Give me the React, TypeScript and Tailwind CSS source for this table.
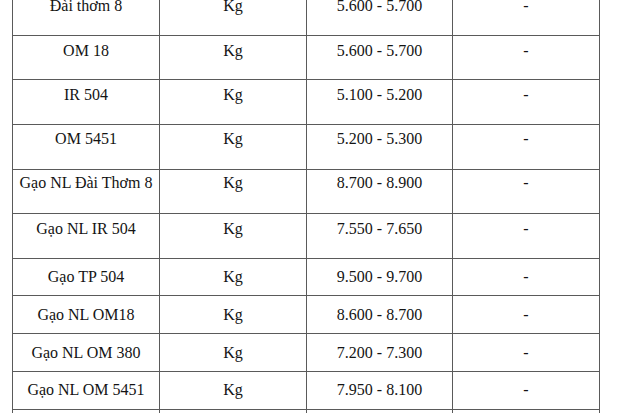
const ROWS: { name: string; price: string; row: string; cell: string }[] = [
  { name: 'Đài thơm 8', price: '5.600 - 5.700', row: 'h-[45px]', cell: 'pt-[5px]' },
  { name: 'OM 18', price: '5.600 - 5.700', row: 'h-[44px]', cell: 'pt-[5px]' },
  { name: 'IR 504', price: '5.100 - 5.200', row: 'h-[45px]', cell: 'pt-[5px]' },
  { name: 'OM 5451', price: '5.200 - 5.300', row: 'h-[45px]', cell: 'pt-[4px]' },
  { name: 'Gạo NL Đài Thơm 8', price: '8.700 - 8.900', row: 'h-[44px]', cell: 'pt-[3px]' },
  { name: 'Gạo NL IR 504', price: '7.550 - 7.650', row: 'h-[45px]', cell: 'pt-[5px]' },
  { name: 'Gạo TP 504', price: '9.500 - 9.700', row: 'h-[37px]', cell: 'pt-[8px]' },
  { name: 'Gạo NL OM18', price: '8.600 - 8.700', row: 'h-[38px]', cell: 'pt-[9px]' },
  { name: 'Gạo NL OM 380', price: '7.200 - 7.300', row: 'h-[38px]', cell: 'pt-[9px]' },
  { name: 'Gạo NL OM 5451', price: '7.950 - 8.100', row: 'h-[38px]', cell: 'pt-[8px]' },
  { name: '', price: '', row: 'h-[40px]', cell: 'pt-[8px]' },
];

export default function App() {
  return (
    <div className="h-[413px] w-[620px] overflow-hidden bg-white font-[family-name:'Liberation_Serif','Times_New_Roman',serif] text-[16px] leading-[20px] text-[#141414]">
      <div className="-mt-[9px] ml-[12px] w-[588px] border-l border-[#5a5a5a]">
        {ROWS.map((r, i) => (
          <div
            key={i}
            className={`grid grid-cols-[147px_147px_146px_147px] border-b border-[#5a5a5a] ${r.row}`}
          >
            <div className={`border-r border-[#5a5a5a] text-center ${r.cell}`}>{r.name}</div>
            <div className={`border-r border-[#5a5a5a] text-center ${r.cell}`}>
              {r.name ? 'Kg' : ''}
            </div>
            <div className={`border-r border-[#5a5a5a] text-center ${r.cell}`}>{r.price}</div>
            <div className={`border-r border-[#5a5a5a] text-center ${r.cell}`}>
              {r.name ? '-' : ''}
            </div>
          </div>
        ))}
      </div>
    </div>
  );
}
